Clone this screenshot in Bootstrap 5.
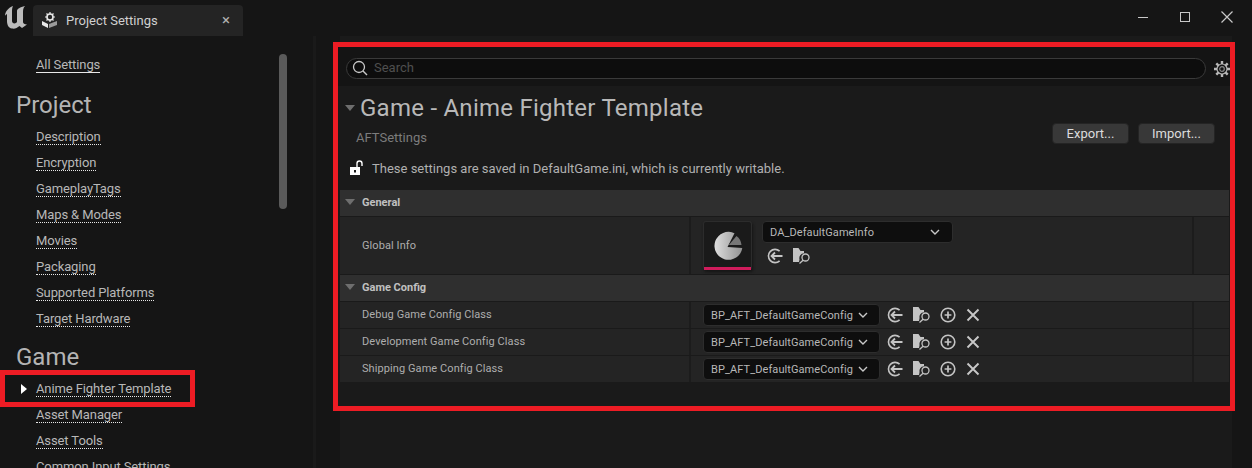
<!doctype html>
<html lang="en"><head><meta charset="utf-8"><title>Project Settings</title>
<link href="https://cdn.jsdelivr.net/npm/bootstrap@5.3.0/dist/css/bootstrap.min.css" rel="stylesheet">
<style>
html,body{height:468px;overflow:hidden;background:#151515}
body{font-family:Roboto,"Liberation Sans",sans-serif;color:#c0c0c0;font-size:13px;line-height:1}
svg{display:block;flex:none}
.ue-top{height:36px}
.ue-logo{margin:5px 0 0 4px;width:24px;height:24px}
.ue-tab{width:210px;height:31px;margin:5px 0 0 5px;background:#242424;border-radius:4px 4px 0 0;color:#d0d0d0;padding:0 13px 0 8px}
.ue-tabx{font-size:15px;color:#b0b0b0}
.ue-win{padding:10px 18px 0 0;gap:28px}
.ue-body{height:432px}
.ue-side{width:316px;flex:none;border-right:3px solid #1a1a1a;position:relative;padding-top:16px}
.ue-scroll{position:absolute;left:279px;top:18px;width:8px;height:155px;background:#5a5a5a;border-radius:4px}
.ue-item{height:26px;padding-left:36px;display:flex;align-items:center}
.ue-link{color:#b8b8b8;border-bottom:1px dotted #e8e8e8;line-height:15px;white-space:nowrap;letter-spacing:-.11px}
.ue-solid{border-bottom:1px solid #e8e8e8}
.ue-head{font-size:24px;color:#b4b4b4;padding-left:16px;height:26px;margin:14px 0 6px;display:flex;align-items:center;line-height:26px}
.ue-head2{margin:12px 0 0}
.ue-mark{border:5px solid #ed1c24;width:195px;height:37px;padding-left:31px;margin-bottom:-5px;position:relative}
.ue-tri{position:absolute;left:16px;top:9px;width:0;height:0;border-left:6px solid #fff;border-top:5px solid transparent;border-bottom:5px solid transparent}
.ue-pane{width:892px;margin-left:24px;background:#1a1a1a;height:432px;padding-top:6px}
.ue-frame{border:5px solid #ed1c24;width:902px;height:369px;margin-left:-7px;background:#1a1a1a}
.ue-searchbar{height:39px;background:#141414;padding:11px 0 0 8px}
.ue-search{width:860px;height:21px;border:1px solid #3a3a3a;border-radius:11px;background:#0d0d0d;color:#4f4f4f;padding:0 0 2px 5px;gap:6px}
.ue-gear{margin-left:8px;margin-top:3px}
.ue-info{height:104px;position:relative;padding-left:7px}
.ue-title{font-size:24px;color:#b8b8b8;height:44px;gap:5px;letter-spacing:.25px}
.ue-down{width:0;height:0;border-top:6px solid #6e6e6e;border-left:5.5px solid transparent;border-right:5.5px solid transparent}
.ue-sub{color:#7c7c7c;padding-left:11px;height:15px;margin-top:1px}
.ue-lock{margin-top:14px;gap:8px;color:#b0b0b0;height:16px;padding-left:5px}
.ue-btns{position:absolute;right:15px;top:37px;gap:9px}
.ue-btn{background:#383838;border:1px solid #242424;color:#dcdcdc;border-radius:4px;height:21px;padding:0;width:77px;font-size:13px;line-height:1}
.ue-table{padding:0 1px 0 2px}
.ue-cat{height:27px;background:#2f2f2f;border-bottom:1px solid #1a1a1a;color:#c0c0c0;font-weight:700;font-size:11px;padding:0 0 2px 5px;gap:7px}
.ue-row{background:#242424;border-bottom:1px solid #1a1a1a;font-size:11px;color:#aeaeae;letter-spacing:.08px}
.ue-r1{height:58px}
.ue-r2{height:27px}
.ue-name{width:351px;padding:0 0 2px 22px;flex:none;border-right:2px solid #1c1c1c;height:100%;display:flex;align-items:center}
.ue-r1 .ue-name{padding-bottom:0}
.ue-val{width:503px;flex:none;border-right:2px solid #1c1c1c;height:100%;padding-left:12px;gap:8px}
.ue-thumb{width:49px;height:49px;margin-right:2px;background:#1a1a1a;border:1px solid #2c2c2c;border-bottom:0;border-radius:3px;box-shadow:1px 2px 3px #151515;position:relative}
.ue-bar{position:absolute;left:0;right:0;bottom:0;height:3px;background:#d01c5c}
.ue-combo{background:#0e0e0e;border:1px solid #2d2d2d;border-radius:4px;color:#b8b8b8;justify-content:space-between;font-size:11px}
.ue-c1{width:191px;height:22px;padding:0 12px 0 7px}
.ue-c2{width:177px;height:22px;padding:0 11px 0 7px}
.ue-stack{align-self:flex-start;margin-top:4px}
.ue-tools{gap:10px;margin-top:5px;padding-left:5px}
.ue-tools2{gap:10px;margin-left:-1px}
</style></head><body>
<svg width="0" height="0" style="position:absolute">
<defs>
<linearGradient id="pg" x1="0" x2="1"><stop offset="0" stop-color="#dedede"/><stop offset="1" stop-color="#929292"/></linearGradient>
<symbol id="ic-back" viewBox="0 0 16 16"><path d="M12.6 3.2A6.6 6.6 0 1 0 12.6 12.8" fill="none" stroke="#c4c4c4" stroke-width="1.6"/><path d="M15.5 8H4.500M8 4.500 4.500 8 8 11.500" fill="none" stroke="#c4c4c4" stroke-width="1.8"/></symbol>
<symbol id="ic-find" viewBox="0 0 17 16"><path d="M0 0h5.500l2 3h3.500v2.200A5 5 0 0 0 6.500 11.500L6 14H0z" fill="#c4c4c4"/><circle cx="12.500" cy="9.500" r="3.500" fill="none" stroke="#c4c4c4" stroke-width="1.300"/><path d="M10 12.200 6.500 15.500" stroke="#c4c4c4" stroke-width="1.300"/></symbol>
<symbol id="ic-plus" viewBox="0 0 16 16"><circle cx="8" cy="8" r="6.8" fill="none" stroke="#c4c4c4" stroke-width="1.6"/><path d="M8 4.600v6.800M4.600 8h6.800" stroke="#c4c4c4" stroke-width="1.700"/></symbol>
<symbol id="ic-x" viewBox="0 0 14 14"><path d="M1.500 1.500l11 11M12.500 1.500l-11 11" stroke="#c8c8c8" stroke-width="1.900"/></symbol>
<symbol id="ic-chev" viewBox="0 0 10 6"><path d="M1 1l4 4 4-4" fill="none" stroke="#c8c8c8" stroke-width="1.400"/></symbol>
</defs></svg>
<div class="ue-top d-flex">
<svg class="ue-logo" viewBox="0 0 24 24"><path d="M1 11C1 7 4 3 9 1C8 3 8 5 8 7V16C8 18 10 19 12 18L13 17V6C13 4 16 2 21 1C19 3 19 5 19 8V17C19 18.500 20.500 19.500 23 19.500L18 23L15.500 21C13 23 11 24 8 23.500C4 23 3 19 3 16V9C2 9.500 1.500 10 1 11Z" fill="#bcbcbc"/></svg>
<div class="ue-tab d-flex align-items-center">
<svg width="17" height="17" viewBox="0 0 17 17" class="me-2"><path d="M1 9l6 3v4l-6-3z" fill="#e8e8e8"/><path d="M8 12l8-3v4l-8 3z" fill="#9a9a9a"/><circle cx="9" cy="5" r="3" fill="none" stroke="#e8e8e8" stroke-width="1.600"/><path d="M9 0v2M9 8v2M4 5h2M12 5h2M5.500 1.500l1.500 1.500M12.500 1.500 11 3M5.500 8.500 7 7M12.500 8.500 11 7" stroke="#e8e8e8" stroke-width="1.200"/></svg>
<span class="flex-grow-1">Project Settings</span><span class="ue-tabx">×</span></div>
<div class="ue-win d-flex ms-auto">
<svg width="14" height="14" viewBox="0 0 14 14"><path d="M2 7.500h10" stroke="#c8c8c8" stroke-width="1"/></svg>
<svg width="14" height="14" viewBox="0 0 14 14"><rect x="2.500" y="2.500" width="9" height="9" fill="none" stroke="#c8c8c8" stroke-width="1"/></svg>
<svg width="14" height="14" viewBox="0 0 14 14"><path d="M1.500 1.500l11 11M12.500 1.500l-11 11" stroke="#c8c8c8" stroke-width="1.200"/></svg>
</div></div>
<div class="ue-body d-flex">
<nav class="ue-side">
<div class="ue-scroll"></div>
<div class="ue-item"><span class="ue-link ue-solid">All Settings</span></div>
<div class="ue-head">Project</div>
<div class="ue-item"><span class="ue-link">Description</span></div>
<div class="ue-item"><span class="ue-link">Encryption</span></div>
<div class="ue-item"><span class="ue-link">GameplayTags</span></div>
<div class="ue-item"><span class="ue-link">Maps &amp; Modes</span></div>
<div class="ue-item"><span class="ue-link">Movies</span></div>
<div class="ue-item"><span class="ue-link">Packaging</span></div>
<div class="ue-item"><span class="ue-link">Supported Platforms</span></div>
<div class="ue-item"><span class="ue-link">Target Hardware</span></div>
<div class="ue-head ue-head2">Game</div>
<div class="ue-item ue-mark"><i class="ue-tri"></i><span class="ue-link">Anime Fighter Template</span></div>
<div class="ue-item"><span class="ue-link">Asset Manager</span></div>
<div class="ue-item"><span class="ue-link">Asset Tools</span></div>
<div class="ue-item"><span class="ue-link">Common Input Settings</span></div>
</nav>
<main class="ue-pane">
<div class="ue-frame">
<div class="ue-searchbar d-flex">
<div class="ue-search d-flex align-items-center">
<svg width="16" height="16" viewBox="0 0 16 16"><circle cx="7" cy="7" r="5.500" fill="none" stroke="#c8c8c8" stroke-width="1.300"/><path d="M11 11l4 4" stroke="#c8c8c8" stroke-width="1.500"/></svg>
<span>Search</span></div>
<svg class="ue-gear" width="16" height="16" viewBox="0 0 16 16"><g stroke="#b8b8b8" stroke-width="2.400"><path d="M8 0v3M8 13v3M0 8h3M13 8h3M2.300 2.300l2 2M11.700 11.700l2 2M13.700 2.300l-2 2M4.300 11.700l-2 2"/></g><circle cx="8" cy="8" r="5" fill="#141414" stroke="#b8b8b8" stroke-width="1.200"/><circle cx="8" cy="8" r="2.300" fill="none" stroke="#8a8a8a" stroke-width="1.200"/></svg>
</div>
<div class="ue-info">
<div class="ue-title d-flex align-items-center"><i class="ue-down"></i><span>Game - Anime Fighter Template</span></div>
<div class="ue-sub">AFTSettings</div>
<div class="ue-lock d-flex align-items-center">
<svg width="14" height="16" viewBox="0 0 14 16"><rect x="0" y="7" width="10" height="8" fill="#fff"/><path d="M7 7V3.500a2.500 2.500 0 0 1 5 0V6" fill="none" stroke="#fff" stroke-width="1.400"/><rect x="4" y="10" width="2" height="2.500" fill="#1a1a1a"/></svg>
<span>These settings are saved in DefaultGame.ini, which is currently writable.</span></div>
<div class="ue-btns d-flex"><button class="btn ue-btn">Export...</button><button class="btn ue-btn">Import...</button></div>
</div>
<div class="ue-table">
<div class="ue-cat d-flex align-items-center"><i class="ue-down"></i><span>General</span></div>
<div class="ue-row ue-r1 d-flex">
<div class="ue-name">Global Info</div>
<div class="ue-val d-flex align-items-center">
<div class="ue-thumb d-flex align-items-center justify-content-center">
<svg width="30" height="30" viewBox="0 0 30 30"><path d="M21.500 2.200A14 14 0 1 0 29.300 17L14.500 16z" fill="url(#pg)"/><path d="M15.800 14 23.500 5A12.500 12.500 0 0 1 28.500 14z" fill="#777"/></svg>
<div class="ue-bar"></div></div>
<div class="ue-stack"><div class="ue-combo ue-c1 d-flex align-items-center"><span>DA_DefaultGameInfo</span><svg width="10" height="6"><use href="#ic-chev"/></svg></div>
<div class="ue-tools d-flex"><svg width="16" height="16"><use href="#ic-back"/></svg><svg width="17" height="16"><use href="#ic-find"/></svg></div></div>
</div>
</div>
<div class="ue-cat d-flex align-items-center"><i class="ue-down"></i><span>Game Config</span></div>
<div class="ue-row ue-r2 d-flex"><div class="ue-name">Debug Game Config Class</div><div class="ue-val d-flex align-items-center"><div class="ue-combo ue-c2 d-flex align-items-center"><span>BP_AFT_DefaultGameConfig</span><svg width="10" height="6"><use href="#ic-chev"/></svg></div><div class="ue-tools2 d-flex align-items-center"><svg width="16" height="16"><use href="#ic-back"/></svg><svg width="17" height="16"><use href="#ic-find"/></svg><svg width="16" height="16"><use href="#ic-plus"/></svg><svg width="14" height="14"><use href="#ic-x"/></svg></div></div></div>
<div class="ue-row ue-r2 d-flex"><div class="ue-name">Development Game Config Class</div><div class="ue-val d-flex align-items-center"><div class="ue-combo ue-c2 d-flex align-items-center"><span>BP_AFT_DefaultGameConfig</span><svg width="10" height="6"><use href="#ic-chev"/></svg></div><div class="ue-tools2 d-flex align-items-center"><svg width="16" height="16"><use href="#ic-back"/></svg><svg width="17" height="16"><use href="#ic-find"/></svg><svg width="16" height="16"><use href="#ic-plus"/></svg><svg width="14" height="14"><use href="#ic-x"/></svg></div></div></div>
<div class="ue-row ue-r2 d-flex"><div class="ue-name">Shipping Game Config Class</div><div class="ue-val d-flex align-items-center"><div class="ue-combo ue-c2 d-flex align-items-center"><span>BP_AFT_DefaultGameConfig</span><svg width="10" height="6"><use href="#ic-chev"/></svg></div><div class="ue-tools2 d-flex align-items-center"><svg width="16" height="16"><use href="#ic-back"/></svg><svg width="17" height="16"><use href="#ic-find"/></svg><svg width="16" height="16"><use href="#ic-plus"/></svg><svg width="14" height="14"><use href="#ic-x"/></svg></div></div></div>
</div>
</div>
</main>
</div>
<script src="https://cdn.jsdelivr.net/npm/bootstrap@5.3.0/dist/js/bootstrap.bundle.min.js"></script>
</body></html>
